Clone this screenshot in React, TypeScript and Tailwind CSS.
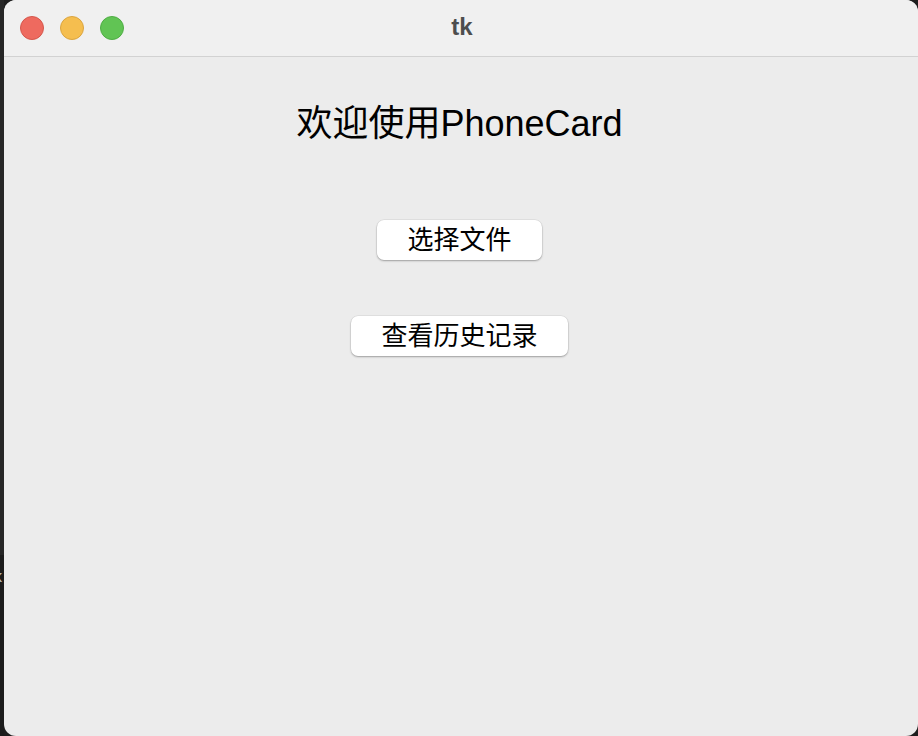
export default function App() {
  const font = { fontFamily: '"Liberation Sans", "Noto Sans CJK SC", sans-serif' };
  return (
    <div className="w-[918px] h-[736px] bg-[#1e1e1e] flex overflow-hidden" style={font}>
      <div className="w-[4px] flex flex-col">
        <div className="h-[555px] bg-[#262626]" />
        <div className="relative flex-1 bg-[#1c1c1c] overflow-hidden">
          <span className="absolute left-[-6px] top-[14px] text-[16px] leading-none text-[#bdbdbd]">k</span>
        </div>
      </div>
      <div className="flex-1 flex flex-col rounded-[12px] overflow-hidden bg-[#ececec]">
        <div className="relative h-[57px] bg-[#f0f0f0] border-b border-[#d2d2d2] flex items-center justify-center">
          <div className="absolute left-[16px] top-[16px] flex gap-[16px]">
            <div className="w-[24px] h-[24px] rounded-full bg-[#ee6a5f] border border-[#d5574c]" />
            <div className="w-[24px] h-[24px] rounded-full bg-[#f5be4f] border border-[#dba540]" />
            <div className="w-[24px] h-[24px] rounded-full bg-[#61c454] border border-[#4fad44]" />
          </div>
          <span className="text-[24px] font-bold text-[#4d4d4d] leading-none -mt-[2px] pl-[2px]">tk</span>
        </div>
        <div className="flex-1 flex flex-col items-center pr-[3px]">
          <h1 className="mt-[45px] text-[36px] leading-[44px] text-black font-normal">欢迎使用PhoneCard</h1>
          <button className="mt-[74px] h-[40px] px-[30px] bg-white rounded-[7px] text-[26px] leading-none text-black shadow-[0_1px_2px_rgba(0,0,0,0.3),0_0_0_0.5px_rgba(0,0,0,0.08)]">
            选择文件
          </button>
          <button className="mt-[56px] h-[40px] px-[30px] bg-white rounded-[7px] text-[26px] leading-none text-black shadow-[0_1px_2px_rgba(0,0,0,0.3),0_0_0_0.5px_rgba(0,0,0,0.08)]">
            查看历史记录
          </button>
        </div>
      </div>
    </div>
  );
}
